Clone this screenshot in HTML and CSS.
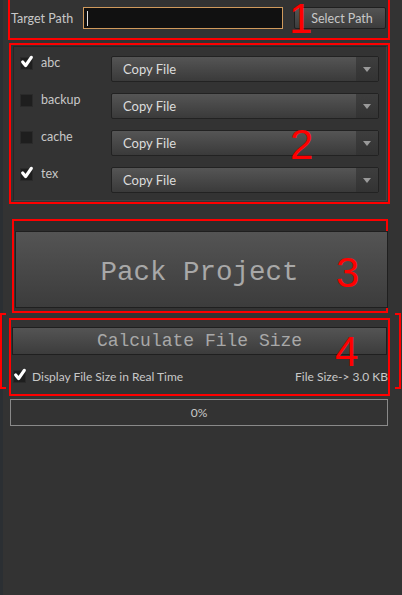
FILE: index.html
```html
<!DOCTYPE html>
<html>
<head>
	<title>Pack Project</title>
	<link rel="stylesheet" href="styles.css">
</head>
<body>
	<div class="page">

	<div class="box target">
		<span class="label">Target Path</span>
		<div class="path-input"><span class="caret"></span></div>
		<button class="btn select-btn">Select Path</button>
		<span class="mark mark-1">1</span>
	</div>

	<div class="box folders">
		<div class="frame">
			<div class="row">
				<span class="check on"><svg viewBox="0 0 13 13"><path d="M2.5 6.5 L5.2 9.8 L10.5 2.2" /></svg></span>
				<span class="name">abc</span>
				<div class="combo"><span class="combo-text">Copy File</span><span class="combo-arrow"></span></div>
			</div>
			<div class="row">
				<span class="check"></span>
				<span class="name">backup</span>
				<div class="combo"><span class="combo-text">Copy File</span><span class="combo-arrow"></span></div>
			</div>
			<div class="row">
				<span class="check"></span>
				<span class="name">cache</span>
				<div class="combo"><span class="combo-text">Copy File</span><span class="combo-arrow"></span></div>
			</div>
			<div class="row">
				<span class="check on"><svg viewBox="0 0 13 13"><path d="M2.5 6.5 L5.2 9.8 L10.5 2.2" /></svg></span>
				<span class="name">tex</span>
				<div class="combo"><span class="combo-text">Copy File</span><span class="combo-arrow"></span></div>
			</div>
		</div>
		<span class="mark mark-2">2</span>
	</div>

	<div class="box pack">
		<button class="btn pack-btn">Pack Project</button>
		<span class="mark mark-3">3</span>
	</div>

	<div class="box size">
		<button class="btn calc-btn">Calculate File Size</button>
		<div class="size-row">
			<span class="check on small"><svg viewBox="0 0 13 13"><path d="M2.5 6.5 L5.2 9.8 L10.5 2.2" /></svg></span>
			<span class="name">Display File Size in Real Time</span>
			<span class="size-value">File Size-&gt; 3.0 KB</span>
		</div>
		<span class="mark mark-4">4</span>
	</div>

	<div class="progress">0%</div>

	</div>
</body>
</html>
```

FILE: styles.css
```css
body {
	margin: 0;
	background-color: #333333;
	font-family: Lato, "Noto Sans", sans-serif;
	font-size: 12px;
	color: #c8c8c8;
	width: 402px;
	height: 595px;
	overflow: hidden;
	box-shadow: inset 3px 0 0 #2b2f33;
}
.page {
	position: relative;
	padding-bottom: 20px;
}
.box {
	position: relative;
	border: 2px solid #ff0000;
	box-sizing: border-box;
}
.mark {
	position: absolute;
	font-family: "Liberation Sans", Arial, sans-serif;
	font-size: 42px;
	line-height: 24px;
	color: #ff0000;
}
.btn {
	font-family: inherit;
	font-size: inherit;
	color: #c8c8c8;
	background: linear-gradient(#545454, #3c3c3c);
	border: 1px solid #1f1f1f;
	border-radius: 2px;
	padding: 0;
	cursor: pointer;
}

/* 1 */
.target {
	margin: 0 12px 0 8px;
	border-top: none;
	display: flex;
	align-items: center;
	padding: 7px 2px 9px 1px;
}
.target .label {
	width: 72px;
	flex-shrink: 0;
	font-size: 12.5px;
}
.path-input {
	width: 195px;
	height: 20px;
	flex-shrink: 0;
	background: #111111;
	border: 1px solid #d09a5c;
	display: flex;
	align-items: center;
	padding-left: 3px;
	box-sizing: content-box;
}
.caret {
	width: 1px;
	height: 15px;
	background: #e0e0e0;
}
.select-btn {
	margin-left: auto;
	flex-shrink: 0;
	width: 92px;
	height: 22px;
	font-size: 12.5px;
	padding-left: 4px;
}
.mark-1 {
	left: 279px;
	top: 7px;
}

/* 2 */
.folders {
	margin: 3px 12px 0 9px;
	padding: 1px 1px 1px 2px;
}
.frame {
	border: 1px solid #424242;
	border-top-color: #262626;
	border-left-color: #262626;
	padding: 9px 7px 7px 6px;
	display: flex;
	flex-direction: column;
	gap: 11px;
}
.row {
	display: flex;
	align-items: flex-start;
	height: 26px;
}
.check {
	width: 13px;
	height: 13px;
	flex-shrink: 0;
	margin-top: 1px;
	background: #1e1e1e;
	border: 1px solid #2a2a2a;
	box-sizing: border-box;
	display: inline-flex;
}
.check svg {
	width: 14px;
	height: 14px;
	margin: -3px 0 0 -1px;
	overflow: visible;
}
.check path {
	fill: none;
	stroke: #ffffff;
	stroke-width: 3;
	stroke-linecap: round;
	stroke-linejoin: round;
}
.name {
	margin-left: 8px;
	font-size: 12.5px;
	line-height: 14px;
}
.row .name {
	width: 70px;
}
.combo {
	flex: 1;
	height: 26px;
	box-sizing: border-box;
	border: 1px solid #222222;
	border-radius: 2px;
	background: linear-gradient(#555555, #3a3a3a);
	display: flex;
	align-items: center;
}
.combo-text {
	flex: 1;
	padding-left: 11px;
	font-size: 13px;
	color: #dcdcdc;
}
.combo-arrow {
	width: 22px;
	height: 24px;
	background: linear-gradient(#3e3e3e, #333333);
	position: relative;
}
.combo-arrow::after {
	content: "";
	position: absolute;
	left: 7px;
	top: 10px;
	border-left: 4px solid transparent;
	border-right: 4px solid transparent;
	border-top: 5px solid #9a9a9a;
}
.mark-2 {
	left: 279px;
	top: 88px;
}

/* 3 */
.pack {
	margin: 15px 14px 0 12px;
	padding: 10px 0 3px 1px;
	background: linear-gradient(#2c2c2c 10px, transparent 10px);
}
.pack-btn {
	display: block;
	width: 373px;
	height: 77px;
	border-radius: 0;
	padding-top: 5px;
	font-family: "Liberation Mono", "Courier New", monospace;
	font-size: 27.5px;
	color: #a8a8a8;
	text-indent: -4px;
}
.mark-3 {
	left: 322px;
	top: 40px;
}

/* 4 */
.size {
	margin: 5px 12px 0 9px;
	padding: 7px 1px 0 1px;
	height: 78px;
}
.size::before,
.size::after {
	content: "";
	position: absolute;
	top: -7px;
	height: 72px;
	width: 4px;
	border: 2px solid #ff0000;
}
.size::before {
	left: -11px;
	border-right: none;
}
.size::after {
	right: -13px;
	border-left: none;
}
.calc-btn {
	display: block;
	width: 375px;
	height: 28px;
	border-radius: 0;
	font-family: "Liberation Mono", "Courier New", monospace;
	font-size: 18px;
	color: #a8a8a8;
}
.size-row {
	display: flex;
	align-items: center;
	margin-top: 14px;
}
.size-row .check {
	margin-top: 0;
	margin-left: 1px;
}
.size-row .name {
	margin-left: 6px;
	font-size: 12px;
}
.size-value {
	margin-left: auto;
	font-size: 12px;
	margin-right: -1px;
}
.mark-4 {
	left: 324px;
	top: 20px;
}

.progress {
	margin: 3px 14px 0 10px;
	height: 27px;
	box-sizing: border-box;
	border: 1px solid #8a8a8a;
	display: flex;
	align-items: center;
	justify-content: center;
	font-size: 12px;
	color: #c8c8c8;
}
```
